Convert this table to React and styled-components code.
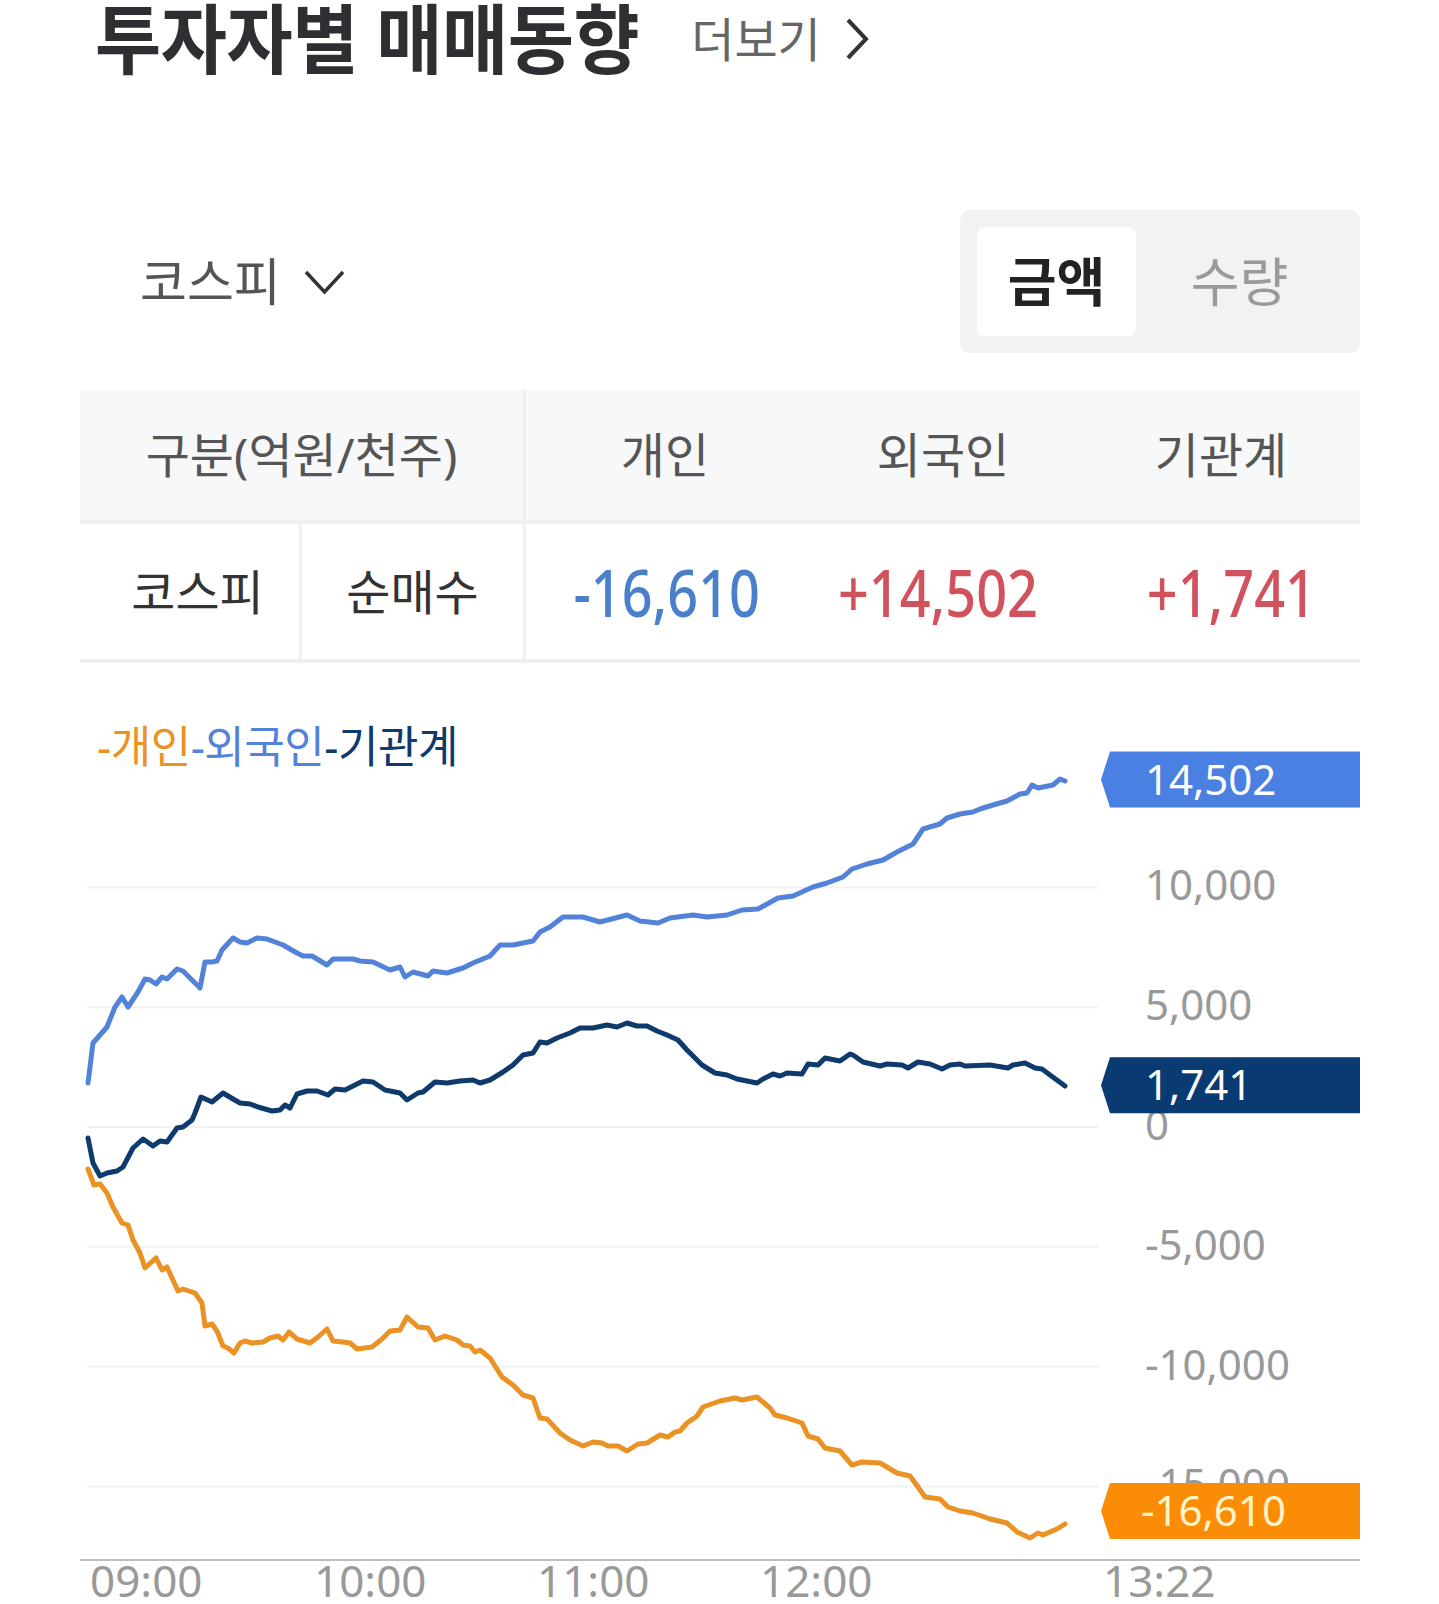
import React from 'react';
import styled, { createGlobalStyle } from 'styled-components';

const GlobalStyle = createGlobalStyle`
  body {
    margin: 0;
    background: #fff;
    font-family: "Noto Sans", "Noto Sans CJK KR", sans-serif;
  }
`;

// chart data in page coordinates (x: time, y: value already mapped)
const foreign = [[88,1083],[93,1043],[100,1035],[107,1027],[115,1007],[122,997],[128,1007],[138,992],[145,979],[150,980],[156,984],[162,977],[167,979],[177,969],[183,971],[200,988],[205,962],[212,962],[217,961],[222,950],[233,938],[240,942],[247,943],[257,938],[267,939],[283,945],[297,953],[303,956],[312,956],[327,965],[333,959],[353,959],[360,961],[373,962],[390,970],[400,967],[405,977],[413,972],[428,976],[433,971],[447,973],[463,968],[473,963],[490,956],[500,945],[513,945],[533,941],[540,932],[550,927],[563,917],[583,917],[600,922],[627,915],[640,921],[658,923],[670,918],[693,915],[707,917],[727,915],[742,910],[758,909],[778,898],[793,896],[813,887],[827,883],[843,877],[852,869],[867,864],[883,860],[897,852],[913,844],[923,829],[940,824],[947,818],[960,814],[973,812],[980,809],[993,805],[1007,801],[1020,794],[1027,793],[1032,785],[1038,788],[1053,785],[1060,779],[1065,781]];

const institution = [[88,1138],[93,1163],[100,1176],[107,1173],[117,1171],[123,1167],[133,1148],[143,1139],[153,1146],[160,1141],[167,1142],[177,1128],[183,1127],[192,1120],[195,1113],[201,1097],[212,1102],[223,1093],[233,1099],[240,1103],[250,1104],[258,1107],[272,1111],[280,1110],[285,1105],[290,1108],[297,1094],[307,1091],[317,1091],[328,1095],[335,1089],[345,1090],[353,1086],[363,1081],[373,1082],[385,1090],[400,1093],[407,1100],[418,1093],[423,1092],[435,1082],[447,1083],[460,1081],[473,1080],[480,1083],[490,1080],[503,1072],[513,1065],[523,1055],[533,1053],[540,1042],[547,1043],[557,1038],[570,1033],[580,1028],[593,1028],[607,1025],[617,1027],[627,1023],[637,1026],[647,1026],[657,1031],[667,1035],[678,1040],[687,1050],[702,1065],[715,1073],[727,1075],[737,1079],[757,1083],[763,1079],[773,1074],[780,1076],[787,1073],[802,1074],[808,1064],[818,1065],[825,1058],[840,1061],[850,1054],[853,1055],[863,1062],[880,1066],[887,1064],[902,1065],[908,1068],[918,1062],[930,1064],[942,1069],[950,1065],[960,1064],[965,1066],[990,1065],[1008,1068],[1013,1065],[1025,1063],[1035,1068],[1042,1069],[1050,1075],[1065,1086]];

const individual = [[88,1169],[94,1185],[100,1184],[107,1193],[113,1207],[122,1223],[128,1225],[133,1240],[140,1253],[145,1268],[156,1258],[162,1270],[167,1267],[178,1291],[183,1289],[195,1293],[202,1303],[205,1326],[212,1324],[217,1331],[223,1346],[228,1348],[234,1353],[240,1343],[245,1341],[252,1343],[263,1342],[270,1338],[278,1336],[283,1340],[289,1332],[297,1339],[310,1343],[318,1337],[327,1329],[333,1341],[343,1342],[350,1343],[357,1349],[372,1347],[382,1339],[390,1331],[400,1330],[407,1317],[418,1327],[428,1328],[435,1340],[445,1336],[457,1340],[463,1345],[470,1346],[475,1352],[480,1350],[490,1358],[502,1377],[513,1385],[523,1395],[533,1398],[540,1418],[547,1419],[560,1433],[570,1440],[583,1446],[593,1442],[602,1443],[608,1446],[618,1446],[627,1451],[638,1444],[647,1443],[660,1435],[668,1437],[675,1432],[680,1431],[687,1423],[697,1416],[703,1407],[720,1401],[735,1398],[742,1400],[757,1397],[770,1408],[775,1415],[787,1418],[802,1423],[808,1436],[818,1439],[825,1448],[840,1451],[852,1465],[862,1462],[880,1463],[897,1473],[910,1476],[918,1487],[925,1497],[940,1499],[948,1507],[960,1511],[973,1513],[990,1519],[1007,1523],[1017,1532],[1030,1538],[1038,1533],[1043,1535],[1057,1529],[1065,1524]];

const ZERO_Y = 1127;
const STEP = 119.8;
const CHART_TOP = 663;
const yTicks = [10000, 5000, 0, -5000, -10000, -15000];
const xTicks = [
  { label: '09:00', x: 90 },
  { label: '10:00', x: 314 },
  { label: '11:00', x: 537 },
  { label: '12:00', x: 760 },
  { label: '13:22', x: 1103 },
];

const series = [
  { name: '개인', value: -16610, color: '#eb9224', badge: '#fb8c06', text: '#fff3c8', points: individual },
  { name: '외국인', value: 14502, color: '#5283d9', badge: '#4a80e2', text: '#ffffff', points: foreign },
  { name: '기관계', value: 1741, color: '#0e3a6c', badge: '#0a3a72', text: '#ffffff', points: institution },
];

const fmt = (n) => n.toLocaleString('en-US');
const signed = (n) => (n > 0 ? '+' : '') + fmt(n);

const Page = styled.div`
  width: 1439px;
  background: #fff;
`;

const Header = styled.header`
  display: flex;
  align-items: center;
  height: 78px;
  padding-left: 95px;
  gap: 52px;
`;

const Title = styled.h1`
  margin: 0;
  font-size: 72px;
  line-height: 1;
  font-weight: 700;
  color: #2e2f33;
  letter-spacing: -0.5px;
  transform: scaleY(1.05);
`;

const MoreLink = styled.a`
  display: flex;
  align-items: center;
  gap: 22px;
  font-size: 47px;
  line-height: 1;
  color: #666;
  text-decoration: none;
`;

const Controls = styled.div`
  display: flex;
  justify-content: space-between;
  align-items: center;
  height: 143px;
  margin: 132px 79px 0 80px;
`;

const Dropdown = styled.button`
  display: flex;
  align-items: center;
  gap: 22px;
  padding: 0 0 0 60px;
  border: 0;
  background: none;
  font-family: inherit;
  font-size: 51px;
  line-height: 1;
  color: #555;
`;

const Toggle = styled.div`
  display: grid;
  grid-template-columns: 159px 1fr;
  width: 400px;
  height: 143px;
  box-sizing: border-box;
  padding: 17px;
  border-radius: 10px;
  background: #f1f2f4;
`;

const ToggleButton = styled.button`
  border: 0;
  border-radius: 8px;
  background: ${(p) => (p.$active ? '#fff' : 'transparent')};
  color: ${(p) => (p.$active ? '#222' : '#9a9a9a')};
  font-family: inherit;
  font-size: 53px;
  font-weight: ${(p) => (p.$active ? 700 : 400)};
  line-height: 1;
`;

const Table = styled.div`
  display: grid;
  grid-template-columns: 222px 224px 1fr 1fr 1fr;
  margin: 37px 79px 0 80px;
`;

const HeadCell = styled.div`
  grid-column: span ${(p) => p.$span || 1};
  display: flex;
  align-items: center;
  justify-content: center;
  height: 130px;
  background: #f7f8fa;
  border-bottom: 4px solid #eeeff1;
  border-right: ${(p) => (p.$divider ? '3px solid #eceef0' : '0')};
  font-size: 48px;
  line-height: 1;
  color: #555;
`;

const BodyCell = styled.div`
  display: flex;
  align-items: center;
  justify-content: ${(p) => (p.$num ? 'flex-end' : 'center')};
  height: 135px;
  box-sizing: content-box;
  padding: ${(p) => (p.$num ? '0 44px 0 0' : p.$first ? '0 0 0 16px' : '0')};
  border-bottom: 4px solid #eeeff1;
  border-right: ${(p) => (p.$divider ? '3px solid #eeeff1' : '0')};
  font-size: 48px;
  line-height: 1;
  color: #333;
`;

const Value = styled.span`
  display: inline-block;
  font-family: "Noto Sans", sans-serif;
  font-size: 54px;
  font-weight: 500;
  line-height: 1;
  transform: scaleY(1.2);
  color: ${(p) => (p.$value < 0 ? '#4a7fcc' : '#d1525c')};
`;

const ChartSvg = styled.svg`
  display: block;
`;

const LegendText = styled.text`
  font-family: "Noto Sans", "Noto Sans CJK KR", sans-serif;
  font-size: 44px;
  letter-spacing: -0.5px;
`;

const GridLine = styled.line`
  stroke: #f1f1f1;
  stroke-width: 2;
`;

const AxisLine = styled.line`
  stroke: #bdbdbd;
  stroke-width: 2;
`;

const AxisText = styled.text`
  font-family: "Noto Sans", sans-serif;
  font-size: 42px;
  fill: #999;
`;

const TimeText = styled(AxisText)`
  font-size: 44px;
`;

const SeriesLine = styled.polyline`
  fill: none;
  stroke: ${(p) => p.$color};
  stroke-width: 5;
  stroke-linejoin: round;
  stroke-linecap: round;
`;

const BadgeShape = styled.polygon`
  fill: ${(p) => p.$color};
`;

const BadgeText = styled.text`
  font-family: "Noto Sans", sans-serif;
  font-size: 42px;
  fill: ${(p) => p.$color};
`;

const valueToY = (v) => ZERO_Y - (v / 5000) * STEP;

const Badge = ({ s }) => {
  // keep the badge above the time axis
  const cy = Math.min(valueToY(s.value), 1511);
  const top = cy - 28;
  const bottom = cy + 28;
  return (
    <g>
      <BadgeShape
        $color={s.badge}
        points={`1101,${cy} 1110,${top} 1360,${top} 1360,${bottom} 1110,${bottom}`}
      />
      <BadgeText $color={s.text} x={s.value < 0 ? 1141 : 1145} y={cy + 15}>
        {fmt(s.value)}
      </BadgeText>
    </g>
  );
};

const Chart = () => (
  <ChartSvg width="1439" height={1604 - CHART_TOP} viewBox={`0 ${CHART_TOP} 1439 ${1604 - CHART_TOP}`}>
    <LegendText x="97" y="763">
      {series.map((s) => (
        <tspan key={s.name} fill={s.color}>-{s.name}</tspan>
      ))}
    </LegendText>
    {yTicks.map((t) => (
      <GridLine key={t} x1="87" x2="1098" y1={valueToY(t)} y2={valueToY(t)} />
    ))}
    {yTicks.map((t) => (
      <AxisText key={t} x="1145" y={valueToY(t) + 13}>{fmt(t)}</AxisText>
    ))}
    <AxisLine x1="80" x2="1360" y1="1560" y2="1560" />
    {xTicks.map((t) => (
      <TimeText key={t.label} x={t.x} y="1597">{t.label}</TimeText>
    ))}
    {series.map((s) => (
      <SeriesLine key={s.name} $color={s.color} points={s.points.map((p) => p.join(',')).join(' ')} />
    ))}
    {series.map((s) => (
      <Badge key={s.name} s={s} />
    ))}
  </ChartSvg>
);

const App = () => (
  <Page>
    <GlobalStyle />
    <Header>
      <Title>투자자별 매매동향</Title>
      <MoreLink href="#">
        더보기
        <svg width="28" height="46" viewBox="0 0 28 46">
          <polyline points="5,4 23,23 5,42" fill="none" stroke="#333" strokeWidth="4" />
        </svg>
      </MoreLink>
    </Header>

    <Controls>
      <Dropdown>
        코스피
        <svg width="43" height="28" viewBox="0 0 43 28">
          <polyline points="3,4 21.5,24 40,4" fill="none" stroke="#333" strokeWidth="3.5" />
        </svg>
      </Dropdown>
      <Toggle>
        <ToggleButton $active>금액</ToggleButton>
        <ToggleButton>수량</ToggleButton>
      </Toggle>
    </Controls>

    <Table>
      <HeadCell $span={2} $divider>구분(억원/천주)</HeadCell>
      <HeadCell>개인</HeadCell>
      <HeadCell>외국인</HeadCell>
      <HeadCell>기관계</HeadCell>
      <BodyCell $divider $first>코스피</BodyCell>
      <BodyCell $divider>순매수</BodyCell>
      {series.map((s) => (
        <BodyCell key={s.name} $num>
          <Value $value={s.value}>{signed(s.value)}</Value>
        </BodyCell>
      ))}
    </Table>

    <Chart />
  </Page>
);

export default App;
